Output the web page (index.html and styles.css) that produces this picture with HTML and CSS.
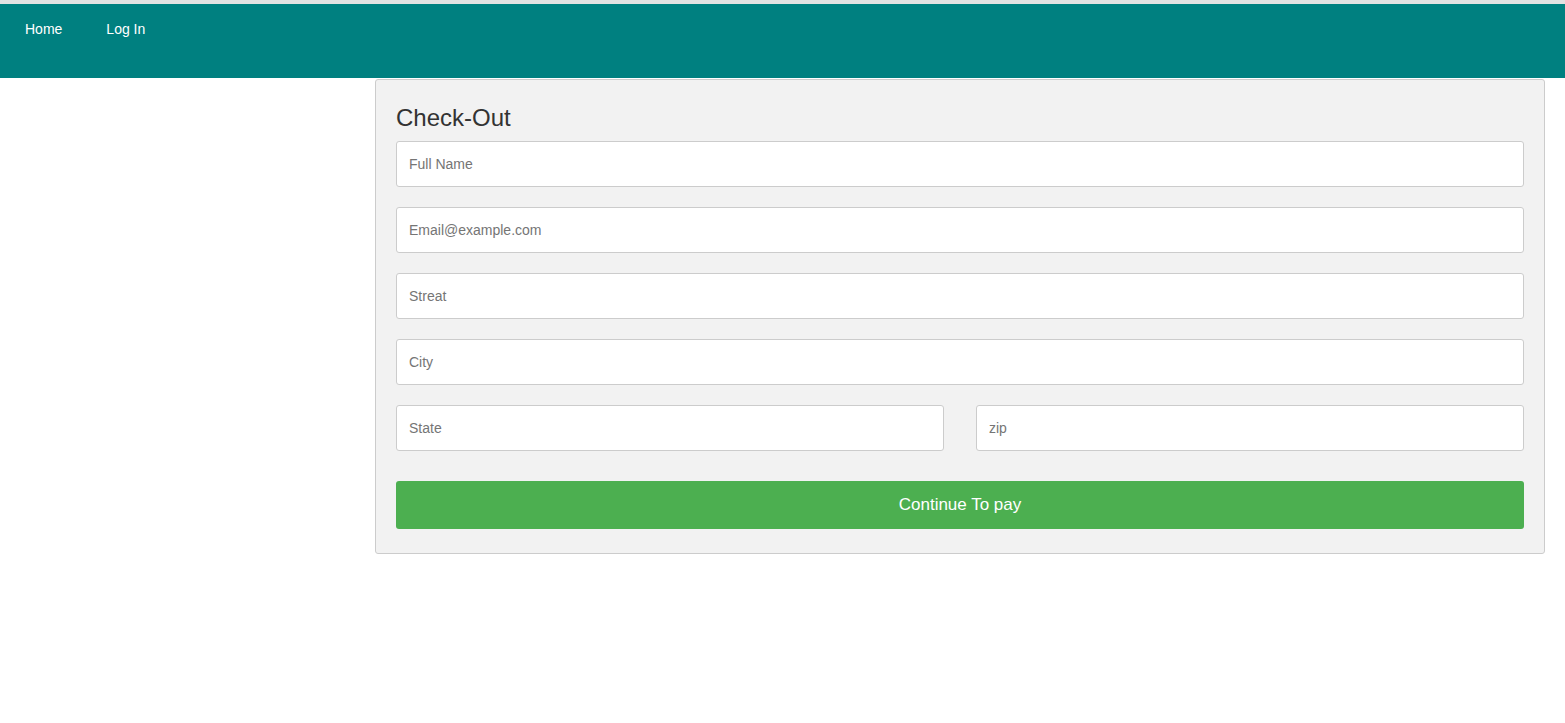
FILE: index.html
```html
<!DOCTYPE html>
<html lang="en">
<head>
<meta charset="utf-8">
<title>Check-Out</title>
<link rel="stylesheet" href="styles.css">
</head>
<body>
  <div class="topline"></div>
  <header class="navbar">
    <a class="nav-link" href="#">Home</a>
    <a class="nav-link" href="#">Log In</a>
  </header>
  <main class="row">
    <section class="checkout">
      <h3 class="title">Check-Out</h3>
      <form class="form">
        <input class="field" type="text" placeholder="Full Name">
        <input class="field" type="text" placeholder="Email@example.com">
        <input class="field" type="text" placeholder="Streat">
        <input class="field" type="text" placeholder="City">
        <div class="split">
          <input class="field" type="text" placeholder="State">
          <input class="field" type="text" placeholder="zip">
        </div>
        <button class="btn" type="button">Continue To pay</button>
      </form>
    </section>
  </main>
</body>
</html>
```
FILE: styles.css
```css
* { box-sizing: border-box; }
html, body { margin: 0; padding: 0; background: #fff; }
body { font-family: "Liberation Sans", Arial, sans-serif; color: #333; }

.topline { height: 4px; background: #e2e2e2; }

.navbar {
  height: 74px;
  background: #008080;
  display: flex;
  align-items: flex-start;
  padding: 17px 0 0 25px;
  gap: 44px;
}
.nav-link {
  color: #fff;
  text-decoration: none;
  font-size: 14px;
  line-height: 17px;
}

.row {
  display: flex;
  justify-content: flex-end;
  padding: 1px 20px 0 0;
}

.checkout {
  width: 1170px;
  background: #f2f2f2;
  border: 1px solid #ccc;
  border-radius: 3px;
  padding: 24px 20px 24px 20px;
}

.title {
  margin: 0 0 10px 0;
  font-size: 24px;
  font-weight: normal;
  line-height: 27px;
  color: #333;
}

.form { display: flex; flex-direction: column; gap: 20px; }

.field {
  width: 100%;
  height: 46px;
  border: 1px solid #ccc;
  border-radius: 3px;
  background: #fff;
  padding: 0 12px;
  font-family: "Liberation Sans", Arial, sans-serif;
  font-size: 14px;
  color: #333;
  margin: 0;
}
.field::placeholder { color: #757575; }

.split {
  display: grid;
  grid-template-columns: 1fr 1fr;
  gap: 32px;
}

.btn {
  margin-top: 10px;
  height: 48px;
  width: 100%;
  border: none;
  border-radius: 3px;
  background: #4caf50;
  color: #fff;
  font-family: "Liberation Sans", Arial, sans-serif;
  font-size: 17px;
  cursor: pointer;
}
```
